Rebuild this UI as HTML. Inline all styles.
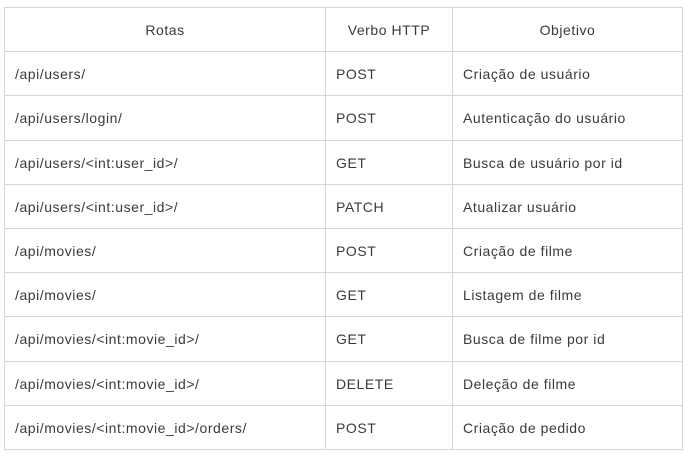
<!DOCTYPE html>
<html><head><style>
body{margin:0;background:#fff;font-family:"Liberation Sans",sans-serif;font-size:14px;letter-spacing:0.55px;color:#3a3a3a}
table{position:absolute;left:4px;top:7px;border-collapse:collapse;width:679px}
tr{height:44.2px}
td,th{border:1px solid #d4d6dc;padding:1px 0 0 10px;font-weight:normal;text-align:left}
th{text-align:center;padding:1px 0 0 0}
td:nth-child(1),th:nth-child(1){width:310px}
td:nth-child(2),th:nth-child(2){width:116px}
</style></head><body>
<table>
<tr><th>Rotas</th><th>Verbo HTTP</th><th>Objetivo</th></tr>
<tr><td>/api/users/</td><td>POST</td><td>Criação de usuário</td></tr>
<tr><td>/api/users/login/</td><td>POST</td><td>Autenticação do usuário</td></tr>
<tr><td>/api/users/&lt;int:user_id&gt;/</td><td>GET</td><td>Busca de usuário por id</td></tr>
<tr><td>/api/users/&lt;int:user_id&gt;/</td><td>PATCH</td><td>Atualizar usuário</td></tr>
<tr><td>/api/movies/</td><td>POST</td><td>Criação de filme</td></tr>
<tr><td>/api/movies/</td><td>GET</td><td>Listagem de filme</td></tr>
<tr><td>/api/movies/&lt;int:movie_id&gt;/</td><td>GET</td><td>Busca de filme por id</td></tr>
<tr><td>/api/movies/&lt;int:movie_id&gt;/</td><td>DELETE</td><td>Deleção de filme</td></tr>
<tr><td>/api/movies/&lt;int:movie_id&gt;/orders/</td><td>POST</td><td>Criação de pedido</td></tr>
</table>
</body></html>
